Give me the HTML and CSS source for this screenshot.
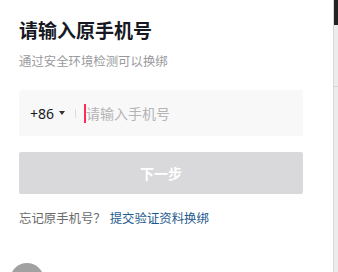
FILE: index.html
```html
<!DOCTYPE html>
<html lang="zh-CN">
<head>
<meta charset="utf-8">
<link rel="stylesheet" href="styles.css">
</head>
<body>
<div class="page">
  <main class="main">
    <h1 class="title">请输入原手机号</h1>
    <p class="subtitle">通过安全环境检测可以换绑</p>
    <div class="phone-field">
      <div class="code">+86<span class="caret"></span></div>
      <span class="divider"></span>
      <span class="cursor"></span>
      <span class="placeholder">请输入手机号</span>
    </div>
    <button class="next-btn">下一步</button>
    <p class="forgot">忘记原手机号？<a class="link">提交验证资料换绑</a></p>
    <div class="float-circle"></div>
  </main>
  <aside class="side">
    <div class="side-top"></div>
    <div class="side-mid"></div>
    <div class="side-rest"></div>
  </aside>
</div>
</body>
</html>
```
FILE: styles.css
```css
html, body {
  margin: 0;
  padding: 0;
  background: #fff;
}
body {
  font-family: "Noto Sans CJK SC", "Noto Sans", sans-serif;
  width: 338px;
  height: 272px;
  overflow: hidden;
}
.page {
  display: flex;
  height: 272px;
}
.main {
  position: relative;
  flex: 1;
  padding: 17px 0 0 19px;
  overflow: hidden;
}
.title {
  margin: 0;
  font-size: 19px;
  line-height: 26px;
  font-weight: 700;
  color: #161823;
}
.subtitle {
  margin: 9px 0 0;
  font-size: 12.4px;
  line-height: 18px;
  color: #9a9a9e;
}
.phone-field {
  margin-top: 20px;
  width: 284px;
  height: 46px;
  background: #f8f8f8;
  border-radius: 2px;
  display: flex;
  align-items: center;
  box-sizing: border-box;
  padding-left: 11px;
}
.code {
  display: flex;
  align-items: center;
  font-size: 14px;
  color: #161823;
  font-family: "Noto Sans", sans-serif;
}
.caret {
  margin-left: 5px;
  width: 0;
  height: 0;
  border-left: 3px solid transparent;
  border-right: 3px solid transparent;
  border-top: 4px solid #333;
}
.divider {
  margin-left: 10px;
  width: 1px;
  height: 9px;
  background: #dcdcdc;
}
.cursor {
  margin-left: 8px;
  width: 2px;
  height: 19px;
  background: #fe2c55;
}
.placeholder {
  font-size: 14px;
  color: #b4b4b6;
}
.next-btn {
  display: block;
  margin-top: 16px;
  width: 284px;
  height: 42px;
  border: 0;
  border-radius: 2px;
  background: #d9d9dc;
  color: #fff;
  font-family: inherit;
  font-size: 14px;
  font-weight: 700;
  padding: 0;
}
.forgot {
  margin: 15px 0 0;
  font-size: 12.4px;
  line-height: 18px;
  color: #6b6b6b;
}
.link {
  margin-left: 4px;
  color: #1e5a8e;
}
.float-circle {
  position: absolute;
  left: 10px;
  top: 263px;
  width: 34px;
  height: 34px;
  border-radius: 50%;
  background: #a1a1a1;
}
.side {
  width: 4px;
  border-left: 1px solid #d8d8d8;
  display: flex;
  flex-direction: column;
}
.side-top {
  height: 25px;
  background: #222;
}
.side-mid {
  height: 61px;
  background: #ececec;
  border-bottom: 1px solid #d6d6d6;
}
.side-rest {
  flex: 1;
  background: #ececec;
}
```
